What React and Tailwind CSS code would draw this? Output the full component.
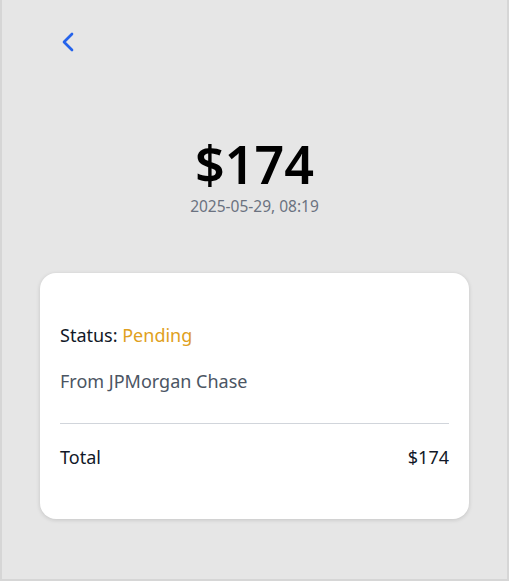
import React from "react";
import { ChevronLeft } from "lucide-react";

const App = () => {
  return (
    <main
      className="h-[581px] w-full bg-[#e6e6e6] border-l-2 border-r-2 border-b-2 border-[#d6d6d6] px-[38px] pt-[26px]"
      style={{ fontFamily: '"Noto Sans", "Open Sans", sans-serif' }}
    >
      <button className="ml-[12px] text-[#2563eb]">
        <ChevronLeft size={32} strokeWidth={2} />
      </button>

      <div className="mt-[72px] flex flex-col items-center">
        <h1 className="text-[52px] leading-[56px] font-semibold text-black">$174</h1>
        <p className="mt-[4px] text-[15.5px] leading-[20px] text-[#6b7280]">2025-05-29, 08:19</p>
      </div>

      <section className="mt-[57px] bg-white rounded-2xl shadow-[0_1px_4px_rgba(0,0,0,0.15)] px-5 pt-[48px] pb-[48px]">
        <p className="text-lg text-[#111827]">
          Status: <span className="text-[#e0a020]">Pending</span>
        </p>
        <p className="mt-[18px] text-lg text-[#4b5563]">From JPMorgan Chase</p>
        <div className="mt-[28px] border-t border-[#d1d5db]" />
        <div className="mt-[19px] flex justify-between text-lg text-[#111827]">
          <span>Total</span>
          <span>$174</span>
        </div>
      </section>
    </main>
  );
};

export default App;
